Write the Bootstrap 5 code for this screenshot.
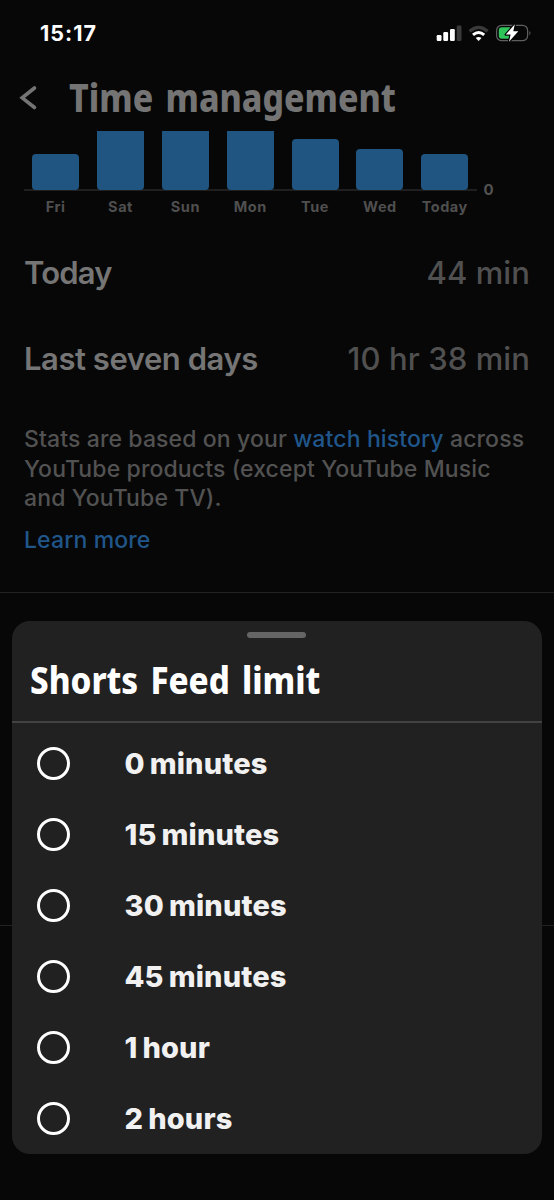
<!DOCTYPE html>
<html lang="en" data-bs-theme="dark">
<head>
<meta charset="utf-8">
<meta name="viewport" content="width=device-width, initial-scale=1">
<title>Time management</title>
<link href="https://cdn.jsdelivr.net/npm/bootstrap@5.3.0/dist/css/bootstrap.min.css" rel="stylesheet">
<style>
body{background:#070707;font-family:Inter,"Liberation Sans",sans-serif;color:#757575}
.screen{height:1200px;width:554px}
.status-row{height:66px;padding:0 22px 0 40px}
.clock{font-size:21.5px;font-weight:700;color:#fff;line-height:1;letter-spacing:1px;padding-top:1px}
.title-row{height:65px;padding-bottom:2px}
.display-face{font-family:"Noto Sans","Open Sans",sans-serif;font-weight:800;line-height:1;white-space:nowrap;transform-origin:left center}
.page-title{font-size:38.5px;color:#747474;margin-left:31px;padding-bottom:1px;word-spacing:4px;transform:scaleX(.879)}
.chart{height:60px;width:453px;margin-left:24px;padding:0 8.7px 0 8.2px;border-bottom:2px solid #1f1f1f}
.bar{width:47px;background:#205481;border-radius:4px;margin-bottom:-1px}
.bar.cut{border-radius:0 0 4px 4px}
.axis-zero{font-size:15px;font-weight:700;color:#525252;line-height:1;margin:51px 0 0 6.5px}
.days{width:453px;margin-left:24px;padding:2px 8.7px 0 8.2px;height:32px}
.day{width:47px;font-size:14.5px;font-weight:700;color:#4f4f4f;line-height:16px;letter-spacing:.55px;white-space:nowrap}
.stat{height:86px;font-size:31px;font-weight:600;line-height:1;white-space:nowrap;letter-spacing:-.45px}
.stat:first-child span:first-child{letter-spacing:-.85px}
.stat-value{color:#505050;font-weight:500;letter-spacing:.1px}
.note{font-size:23px;font-weight:500;line-height:29.6px;color:#525252;white-space:nowrap;letter-spacing:.12px}
.blue{color:#20568a;text-decoration:none}
.rule{height:1px;background:#222}
.sheet{top:621px;left:12px;width:530px;height:533px;border-radius:18px;background:#212121;color:#f1f1f1}
.grip{width:59px;height:6px;background:#656565;margin:11px auto 0;transform:translateX(-1px)}
.sheet-head{height:85px;border-bottom:2px solid #424242;padding:0 18px}
.sheet-title{font-size:36.5px;color:#fff;word-spacing:4px;padding-top:1px;transform:scaleX(.908)}
.options{padding-top:5px}
.option{height:71px;padding-left:25px;font-size:29px;font-weight:800;line-height:1;white-space:nowrap;letter-spacing:.15px;word-spacing:-1.5px}
.ring{width:33px;height:33px;border:3px solid #fff;margin-right:54.5px}
</style>
</head>
<body class="m-0">
<div class="screen position-relative overflow-hidden">
  <header>
    <div class="status-row d-flex align-items-center justify-content-between">
      <span class="clock">15:17</span>
      <svg width="98" height="20" viewBox="434 23 98 20" aria-hidden="true">
        <g fill="#fff"><rect x="436.7" y="35" width="4.8" height="6" rx="1.2"/><rect x="443.3" y="32" width="4.8" height="9" rx="1.2"/><rect x="450" y="29" width="4.8" height="12" rx="1.2"/></g>
        <rect x="456.7" y="25.5" width="4.8" height="15.5" rx="1.2" fill="#3a3a3a"/>
        <path d="M469.6 31.3Q478.6 23.3 487.6 31.3" fill="none" stroke="#3a3a3a" stroke-width="3.2"/>
        <path d="M473 34.9Q478.6 30.2 484.2 34.9" fill="none" stroke="#fff" stroke-width="3"/>
        <path d="M475.7 38.1Q478.6 35.8 481.5 38.1L478.6 41Z" fill="#fff"/>
        <rect x="496.6" y="25.3" width="31" height="15.4" rx="5" fill="none" stroke="#5f5f5f" stroke-width="1.2"/>
        <path d="M529.4 30.7q2.2 2.3 0 4.6z" fill="#5f5f5f"/>
        <path d="M502 27.3h8v11.4h-8q-3.2 0-3.2-3.2v-5q0-3.2 3.2-3.2z" fill="#30c55a"/>
        <path d="M514.8 24.3L505.8 34.6h4.8l-1.6 7.2 9.3-10.6h-5z" fill="#fff" stroke="#070707" stroke-width="2.4" paint-order="stroke" stroke-linejoin="round"/>
      </svg>
    </div>
    <div class="title-row d-flex align-items-center">
      <svg class="ms-3" width="22" height="28" viewBox="16 84 22 28" fill="none" stroke="#747474" stroke-width="3.6" stroke-linecap="round" aria-label="Back"><path d="M34.5 88L22.2 97.800000000000004l12.300000000000001 9.7"/></svg>
      <h1 class="display-face page-title mb-0">Time management</h1>
    </div>
  </header>
  <main>
    <div class="d-flex">
      <div class="chart d-flex align-items-end justify-content-between">
        <div class="bar" style="height:36px"></div>
        <div class="bar cut" style="height:59px"></div>
        <div class="bar cut" style="height:59px"></div>
        <div class="bar cut" style="height:59px"></div>
        <div class="bar" style="height:51px"></div>
        <div class="bar" style="height:41px"></div>
        <div class="bar" style="height:36.5px"></div>
      </div>
      <span class="axis-zero">0</span>
    </div>
    <div class="days d-flex justify-content-between">
      <div class="day d-flex justify-content-center">Fri</div><div class="day d-flex justify-content-center">Sat</div><div class="day d-flex justify-content-center">Sun</div><div class="day d-flex justify-content-center">Mon</div><div class="day d-flex justify-content-center">Tue</div><div class="day d-flex justify-content-center">Wed</div><div class="day d-flex justify-content-center">Today</div>
    </div>
    <section class="px-4">
      <div class="stat d-flex align-items-center justify-content-between"><span>Today</span><span class="stat-value">44 min</span></div>
      <div class="stat d-flex align-items-center justify-content-between"><span>Last seven days</span><span class="stat-value">10 hr 38 min</span></div>
      <p class="note mb-0 pt-4">Stats are based on your <a class="blue" href="#">watch history</a> across<br>YouTube products (except YouTube Music<br>and YouTube TV).</p>
      <p class="note mb-0 mt-2 pt-1"><a class="blue" href="#">Learn more</a></p>
    </section>
    <div class="rule" style="margin-top:37px"></div>
    <div class="rule" style="margin-top:332px"></div>
  </main>
  <div class="sheet position-absolute overflow-hidden" role="dialog">
    <div class="grip rounded-pill"></div>
    <div class="sheet-head d-flex align-items-center"><h2 class="display-face sheet-title mb-0">Shorts Feed limit</h2></div>
    <div class="options" role="radiogroup">
      <div class="option d-flex align-items-center"><span class="ring rounded-circle"></span><span>0 minutes</span></div>
      <div class="option d-flex align-items-center"><span class="ring rounded-circle"></span><span>15 minutes</span></div>
      <div class="option d-flex align-items-center"><span class="ring rounded-circle"></span><span>30 minutes</span></div>
      <div class="option d-flex align-items-center"><span class="ring rounded-circle"></span><span>45 minutes</span></div>
      <div class="option d-flex align-items-center"><span class="ring rounded-circle"></span><span>1 hour</span></div>
      <div class="option d-flex align-items-center"><span class="ring rounded-circle"></span><span>2 hours</span></div>
    </div>
  </div>
</div>
<script src="https://cdn.jsdelivr.net/npm/bootstrap@5.3.0/dist/js/bootstrap.bundle.min.js"></script>
</body>
</html>
